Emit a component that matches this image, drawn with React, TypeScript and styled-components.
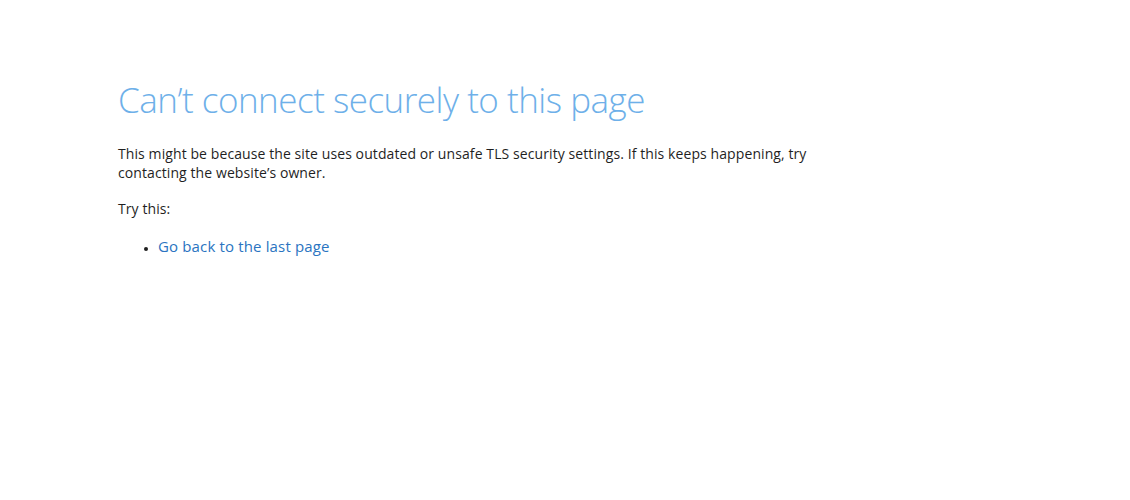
import React from "react";
import styled, { createGlobalStyle } from "styled-components";

const GlobalStyle = createGlobalStyle`
  html, body {
    margin: 0;
    padding: 0;
    background: #ffffff;
  }
  body {
    font-family: "Open Sans", "Noto Sans", sans-serif;
  }
`;

const Page = styled.main`
  padding: 76px 0 0 118px;
  width: 700px;
  color: #1f1f1f;
`;

const Title = styled.h1`
  margin: 0 0 20px;
  font-size: 35px;
  font-weight: 300;
  line-height: 48px;
  letter-spacing: -0.5px;
  color: #6eb0e9;
  white-space: nowrap;
`;

const Text = styled.p`
  margin: 0 0 17px;
  font-size: 14px;
  line-height: 19px;
  letter-spacing: 0.09px;
`;

const List = styled.ul`
  margin: 19px 0 0;
  padding-left: 40px;
  font-size: 14px;
  line-height: 19px;
`;

const Item = styled.li`
  &::marker {
    color: #1f1f1f;
    font-size: 10px;
  }
`;

const Link = styled.a`
  color: #2a74c1;
  text-decoration: none;
  font-size: 15px;
  letter-spacing: 0.15px;
`;

export default function App() {
  return (
    <>
      <GlobalStyle />
      <Page>
        <Title>Can’t connect securely to this page</Title>
        <Text>
          This might be because the site uses outdated or unsafe TLS security
          settings. If this keeps happening, try contacting the website’s owner.
        </Text>
        <Text>Try this:</Text>
        <List>
          <Item>
            <Link href="#">Go back to the last page</Link>
          </Item>
        </List>
      </Page>
    </>
  );
}
